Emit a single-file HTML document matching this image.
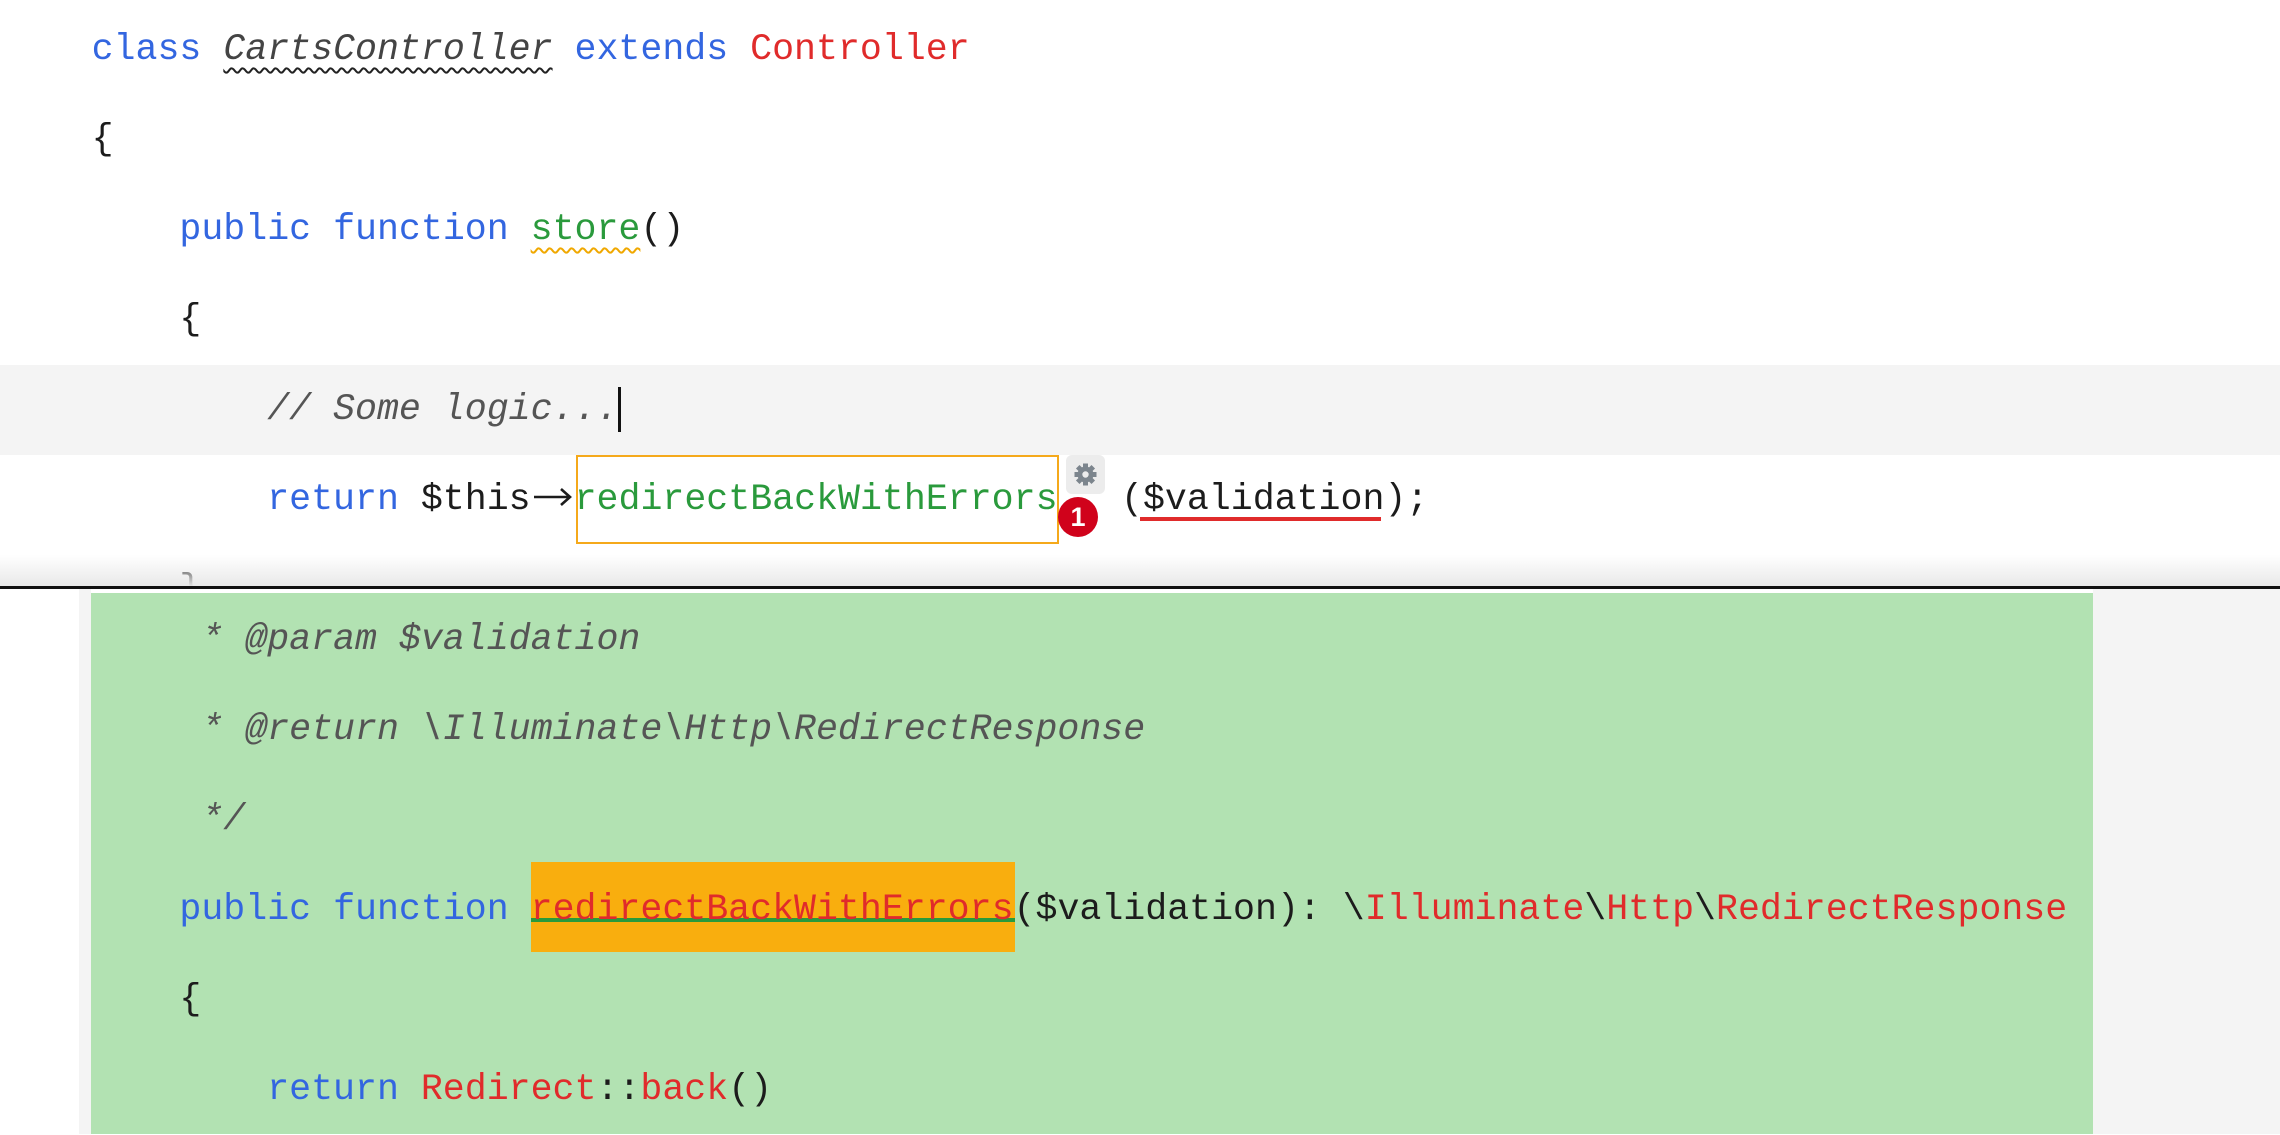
<!DOCTYPE html>
<html><head><meta charset="utf-8"><style>
html,body{margin:0;padding:0;width:2280px;height:1134px;overflow:hidden;background:#fff}
.code{font-family:"Liberation Mono",monospace;position:absolute;left:91.6px;color:#1c1c1c;font-size:36.6px}
.ln{height:90px;line-height:90px;white-space:pre}
.k{color:#3366e0}.r{color:#e02b2b}.g{color:#2a9a3c}.c{color:#555;font-style:italic}
.ital{font-style:italic;color:#444;text-decoration:underline wavy #222;text-decoration-thickness:2px;text-underline-offset:8px}
.st{text-decoration:underline wavy #f0a800;text-decoration-thickness:2px;text-underline-offset:8px}
</style></head><body>
<div style="position:absolute;left:0;top:365px;width:2280px;height:90px;background:#f4f4f4"></div>
<div class="code" style="top:5px"><div class="ln"><span class="k">class</span> <span class="ital">CartsController</span> <span class="k">extends</span> <span class="r">Controller</span></div><div class="ln">{</div><div class="ln">    <span class="k">public</span> <span class="k">function</span> <span class="g st">store</span>()</div><div class="ln">    {</div><div class="ln"><span class="c">        // Some logic...</span></div><div class="ln">        <span class="k">return</span> $this<svg width="44" height="30" viewBox="0 0 44 30" style="vertical-align:-3px"><path d="M3 15H39M30 7L39 15L30 23" fill="none" stroke="#1c1c1c" stroke-width="2.6"/></svg><span class="g">redirectBackWithErrors</span></div><div class="ln">    }</div></div>
<div style="position:absolute;left:618px;top:387px;width:3px;height:45px;background:#111"></div>
<div style="position:absolute;left:576px;top:455px;width:479px;height:85px;border:2px solid #f5a91b"></div>
<div style="position:absolute;left:1066px;top:455px;width:39px;height:39px;background:#ececec;border-radius:6px"><svg width="39" height="39" viewBox="0 0 39 39"><g transform="translate(19.5 19.5)" fill="#7c858d"><circle r="8"/><g id="t"><rect x="-2.5" y="-11" width="5" height="22"/></g><use href="#t" transform="rotate(45)"/><use href="#t" transform="rotate(90)"/><use href="#t" transform="rotate(135)"/><circle r="3.2" fill="#ececec"/></g></svg></div>
<div style="position:absolute;left:1058px;top:497px;width:40px;height:40px;border-radius:50%;background:#d0021b;color:#fff;font:bold 27px/40px 'Liberation Sans',sans-serif;text-align:center">1</div>
<div class="code" style="left:1121px;top:455px"><div class="ln">($validation);</div></div>
<div style="position:absolute;left:1140px;top:517px;width:241px;height:4px;background:#e02b2b"></div>
<div style="position:absolute;left:0;top:555px;width:2280px;height:32px;background:linear-gradient(#fff0,#e8e8e8)"></div>
<div style="position:absolute;left:0;top:586px;width:2280px;height:3px;background:#111"></div>
<div style="position:absolute;left:0;top:589px;width:2280px;height:545px;background:#fff"></div>
<div style="position:absolute;left:79px;top:589px;width:12px;height:545px;background:#f4f4f4"></div>
<div style="position:absolute;left:2093px;top:589px;width:187px;height:545px;background:#f4f4f4"></div>
<div style="position:absolute;left:91px;top:593px;width:2002px;height:541px;background:#b2e2b2"></div>
<div style="position:absolute;left:531px;top:862px;width:484px;height:90px;background:#f9ae0e"></div>
<div style="position:absolute;left:531px;top:918px;width:484px;height:4px;background:#2a9a3c"></div>
<div class="code" style="top:595px;left:91.6px"><div class="ln c">     * @param $validation</div><div class="ln c">     * @return \Illuminate\Http\RedirectResponse</div><div class="ln c">     */</div><div class="ln">    <span class="k">public</span> <span class="k">function</span> <span class="r">redirectBackWithErrors</span>($validation): \<span class="r">Illuminate</span>\<span class="r">Http</span>\<span class="r">RedirectResponse</span></div><div class="ln">    {</div><div class="ln">        <span class="k">return</span> <span class="r">Redirect</span>::<span class="r">back</span>()</div></div>
</body></html>
